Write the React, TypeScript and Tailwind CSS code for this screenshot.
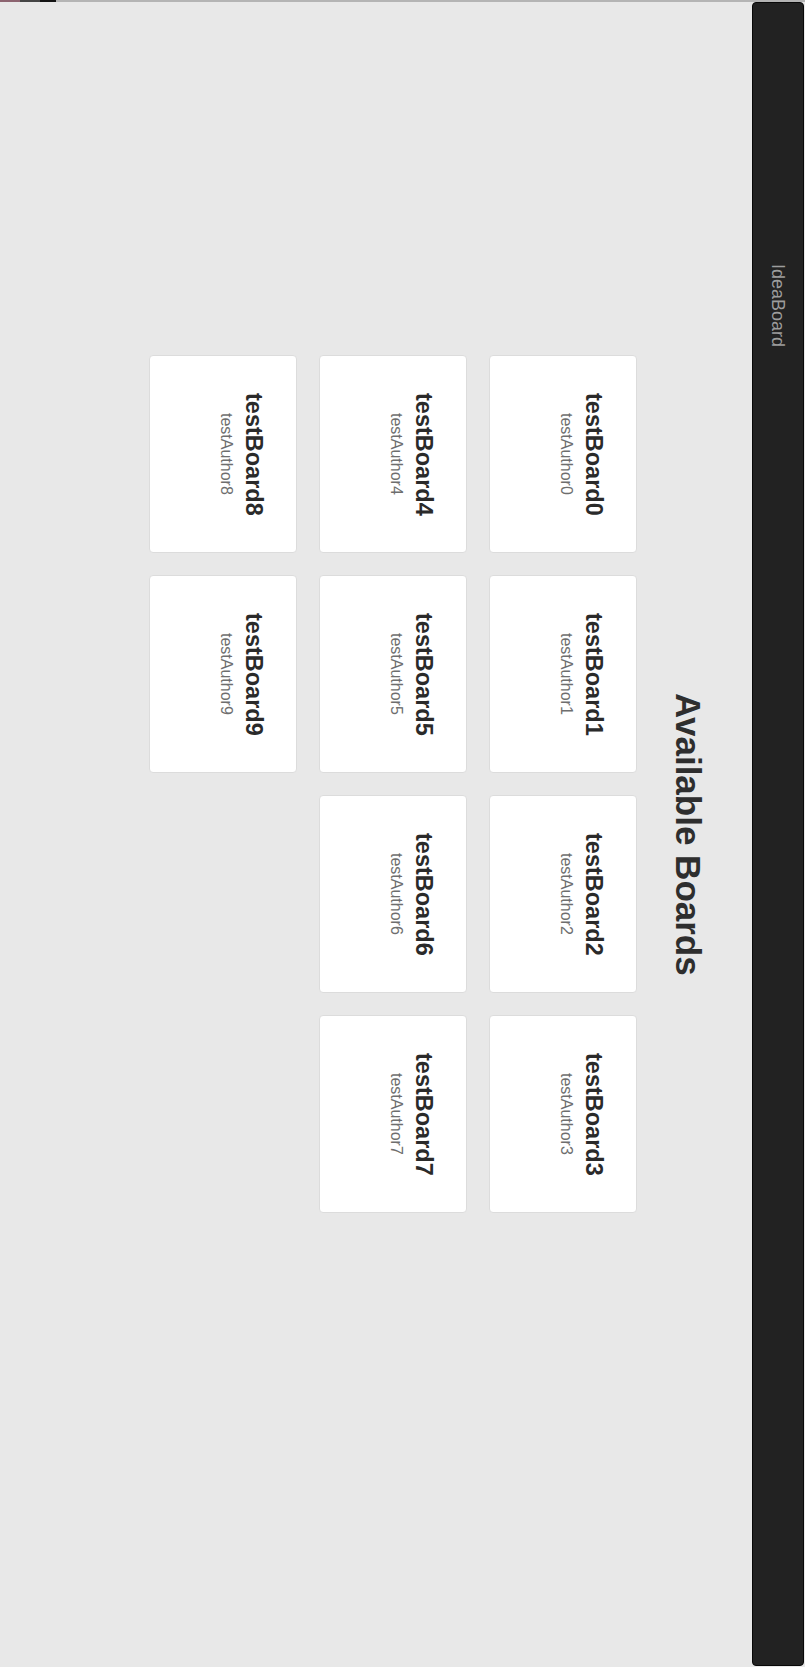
import React from 'react';

interface Board {
    name: string;
    author: string;
}

const boards: Board[] = Array.from({ length: 10 }, (_, i) => ({
    name: `testBoard${i}`,
    author: `testAuthor${i}`,
}));

const BoardCard: React.FC<{ board: Board }> = ({ board }) => (
    <div className="w-[148.5px] rounded-[4px] border border-[#dcdcdc] bg-white pr-[29px] text-center">
        <h3 className="text-[23.5px] leading-[26px] font-bold text-[#2a2a2a]">{board.name}</h3>
        <p className="mr-[5px] text-[16px] leading-[20px] text-[#6e6e6e]">{board.author}</p>
    </div>
);

export default function App() {
    return (
        <div className="w-[805px] h-[1667px] overflow-hidden bg-[#e8e8e8] font-['Liberation_Sans',Arial,sans-serif]">
            <div className="flex h-[2px] w-full">
                <div className="w-[20px] bg-[#8c6470]" />
                <div className="w-[20px] bg-[#454545]" />
                <div className="w-[16px] bg-[#141414]" />
                <div className="flex-1 bg-[#b4b4b4]" />
            </div>
            <div className="h-[1665px] w-[805px] [writing-mode:vertical-rl]">
                <nav className="mr-px mb-px w-[52px] rounded-[4px] border border-[#080808] bg-[#222222]">
                    <div className="pt-[261px] pr-[15px] text-[18px] leading-[20px] text-[#9d9d9d]">IdeaBoard</div>
                </nav>
                <h1 className="mr-[44px] text-center text-[35px] leading-[40px] font-bold text-[#2e2e2e]">
                    Available Boards
                </h1>
                <div className="mr-[31px] grid grid-cols-[repeat(4,198px)] gap-x-[22px] gap-y-[21.5px] pt-[353px]">
                    {boards.map(b => (
                        <BoardCard key={b.name} board={b} />
                    ))}
                </div>
            </div>
        </div>
    );
}
